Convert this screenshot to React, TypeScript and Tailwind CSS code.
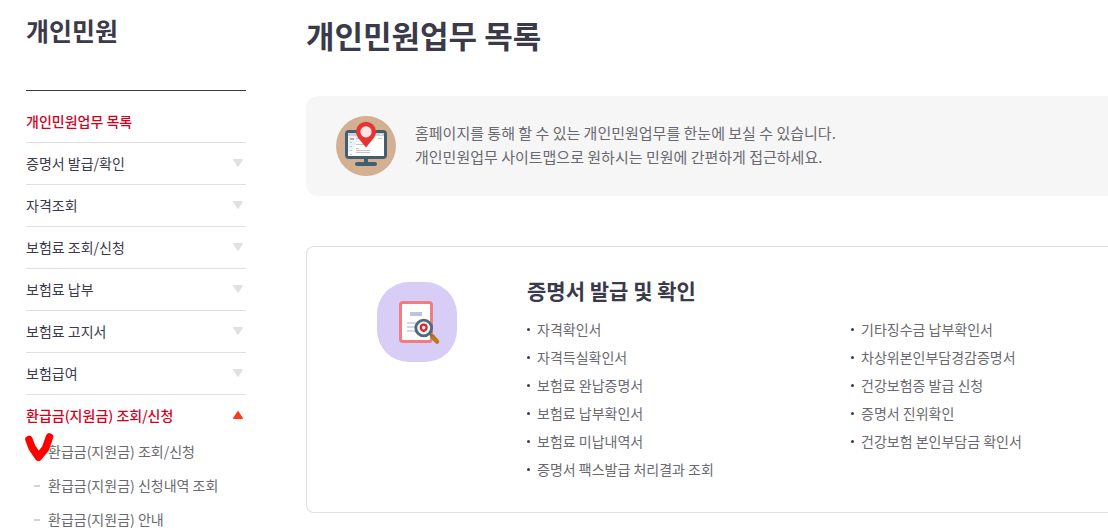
import React, { useState } from "react";

type MenuItem = { label: string; children?: string[] };

const menu: MenuItem[] = [
  { label: "증명서 발급/확인", children: [] },
  { label: "자격조회", children: [] },
  { label: "보험료 조회/신청", children: [] },
  { label: "보험료 납부", children: [] },
  { label: "보험료 고지서", children: [] },
  { label: "보험급여", children: [] },
  {
    label: "환급금(지원금) 조회/신청",
    children: ["환급금(지원금) 조회/신청", "환급금(지원금) 신청내역 조회", "환급금(지원금) 안내"],
  },
];

const certificates: string[][] = [
  ["자격확인서", "자격득실확인서", "보험료 완납증명서", "보험료 납부확인서", "보험료 미납내역서", "증명서 팩스발급 처리결과 조회"],
  ["기타징수금 납부확인서", "차상위본인부담경감증명서", "건강보험증 발급 신청", "증명서 진위확인", "건강보험 본인부담금 확인서"],
];

function Arrow({ open }: { open: boolean }) {
  return open ? (
    <svg className="h-2 w-[10px]" viewBox="0 0 10 8" aria-hidden="true">
      <path d="M5 .8 9.2 7.2H.8Z" fill="#ff3a1d" stroke="#ff3a1d" strokeWidth="1.4" strokeLinejoin="round" />
    </svg>
  ) : (
    <svg className="h-2 w-[10px]" viewBox="0 0 10 8" aria-hidden="true">
      <path d="M.8.8h8.4L5 7.2Z" fill="#e1e1e1" stroke="#e1e1e1" strokeWidth="1.4" strokeLinejoin="round" />
    </svg>
  );
}

function CheckMark() {
  return (
    <svg className="absolute -top-1 -left-px h-[30px] w-[30px]" viewBox="0 0 30 30" aria-hidden="true">
      <path d="M4 7.500 7 15.500 13.500 25 20.500 16.500 24.500 5" fill="none" stroke="#f00" strokeWidth="7.600" strokeLinecap="round" strokeLinejoin="round" />
    </svg>
  );
}

function MonitorIcon() {
  return (
    <svg className="size-[60px] shrink-0" viewBox="0 0 60 60" aria-hidden="true">
      <circle cx="30" cy="30" r="30" fill="#d4b092" />
      <rect x="9" y="14" width="42" height="29" rx="4" fill="#425e70" />
      <path d="M28 42h4v5h-4z" fill="#425e70" />
      <rect x="19" y="46" width="22" height="4" rx="2" fill="#425e70" />
      <path d="M12 17h36v23H12z" fill="#fff" />
      <path d="M12 17h36v3H12z" fill="#cfd1d2" />
      <path d="M12 20h15L14 36l-2 1z" fill="#e8f3f8" />
      <path d="M14 22h4v2h-4z" fill="#df9fa0" />
      <path d="M14 26.500h2M14 30.500h2M14 34.500h2M14 38.500h2M20 22.500h4M42 22.500h4M20 28.500h8M20 32.500h3M20 34.500h14M20 36.500h14" stroke="#c3c6c8" />
      <path d="M44 18.500h2" stroke="#fff" />
      <path d="M30 31.500 21.800 21.500A10 10 0 1 1 38.200 21.500Z" fill="#e73432" />
      <circle cx="30" cy="15.800" r="5.600" fill="#fde5e5" />
    </svg>
  );
}

function CertificateIcon() {
  return (
    <svg className="size-20" viewBox="0 0 80 80" aria-hidden="true">
      <rect width="80" height="80" rx="32" fill="#d8cdf6" />
      <rect x="23.500" y="20.500" width="31" height="39" rx="2.500" fill="#fff" stroke="#f17d80" strokeWidth="3" />
      <path d="M33 30h12v4H33z" fill="#bbc5de" />
      <path d="M30 41h10M30 45h10M30 49h10" stroke="#c4cce2" strokeWidth="1.600" />
      <path d="m55.500 54.500 4.500 5" stroke="#b87a20" strokeWidth="4.500" strokeLinecap="round" />
      <path d="m52.500 51.500 3 3" stroke="#8c7340" strokeWidth="2.500" />
      <circle cx="46.700" cy="46" r="7.900" fill="#dff5fb" stroke="#526978" strokeWidth="2.800" />
      <path d="M46.700 49c-1.800-.6-2.900-1.800-2.900-3.400a2.900 2.900 0 0 1 5.800 0c0 1.600-1.100 2.800-2.900 3.400Z" fill="#fbe9e9" stroke="#dc2429" strokeWidth="2.200" />
    </svg>
  );
}

function MenuRow({ item, initiallyOpen }: { item: MenuItem; initiallyOpen: boolean }) {
  const [open, setOpen] = useState(initiallyOpen);
  const children = item.children ?? [];
  return (
    <li className={initiallyOpen ? "" : "border-b border-[#e1e1e1]"}>
      <button
        type="button"
        aria-expanded={open}
        onClick={() => setOpen(!open)}
        className={
          open
            ? "flex h-[41px] w-full cursor-pointer items-center justify-between pr-[3px] pb-0.5 text-left font-medium text-[#d5001c]"
            : "flex h-[41px] w-full cursor-pointer items-center justify-between pr-[3px] pb-0.5 text-left text-[#3a3a4a]"
        }
      >
        {item.label}
        <Arrow open={open} />
      </button>
      {open && children.length > 0 && (
        <ul className="text-[#69696f]">
          {children.map((child, i) => (
            <li key={child} className="relative flex h-[34px] items-center pb-0.5">
              {i === 0 ? <CheckMark /> : <span className="ml-2 h-0.5 w-1.5 bg-[#d3d3d3]" />}
              <a href="#" className={i === 0 ? "ml-[22px] pb-0.5" : "ml-2 pb-0.5"}>
                {child}
              </a>
            </li>
          ))}
        </ul>
      )}
    </li>
  );
}

export default function App() {
  return (
    <div className="flex bg-white pl-[26px] font-['Noto_Sans_CJK_KR',sans-serif] text-sm whitespace-nowrap text-[#69696f]">
      <aside className="w-[220px] shrink-0">
        <h2 className="flex h-[91px] items-start border-b border-[#3a3a4a] pt-3 text-[25px] leading-9 font-bold text-[#3a3a4a]">개인민원</h2>
        <nav className="pt-2.5" aria-label="개인민원">
          <ul>
            <li className="border-b border-[#e1e1e1]">
              <a href="#" aria-current="page" className="flex h-[41px] items-center pb-0.5 font-medium text-[#d5001c]">
                개인민원업무 목록
              </a>
            </li>
            {menu.map((item) => (
              <MenuRow key={item.label} item={item} initiallyOpen={(item.children ?? []).length > 0} />
            ))}
          </ul>
        </nav>
      </aside>

      <main className="ml-[60px] min-w-0 flex-1 overflow-hidden pt-[11px]">
        <h1 className="text-[31px] leading-[48px] font-bold text-[#3a3a4a]">개인민원업무 목록</h1>

        <section className="mt-[37px] flex h-[100px] items-center gap-[19px] rounded-l-xl bg-[#f6f6f6] pl-[30px]">
          <MonitorIcon />
          <p className="pb-0.5 text-[15px] leading-6">
            홈페이지를 통해 할 수 있는 개인민원업무를 한눈에 보실 수 있습니다.
            <br />
            개인민원업무 사이트맵으로 원하시는 민원에 간편하게 접근하세요.
          </p>
        </section>

        <section className="mt-[50px] flex rounded-l-lg border border-r-0 border-[#e1e1e1] pt-[29px] pb-[29px] pl-[70px]">
          <div className="w-[150px] shrink-0 pt-1.5">
            <CertificateIcon />
          </div>
          <div className="min-w-0 flex-1">
            <h2 className="text-[21px] leading-7 font-bold text-[#3a3a4a]">증명서 발급 및 확인</h2>
            <div className="mt-[11px] flex">
              {certificates.map((column) => (
                <ul key={column[0]} className="w-[324px] shrink-0">
                  {column.map((label) => (
                    <li key={label} className="flex h-7 items-center gap-[7px]">
                      <span className="size-[3px] rounded-full bg-[#3a3a4a]" />
                      <a href="#">{label}</a>
                    </li>
                  ))}
                </ul>
              ))}
            </div>
          </div>
        </section>
      </main>
    </div>
  );
}
